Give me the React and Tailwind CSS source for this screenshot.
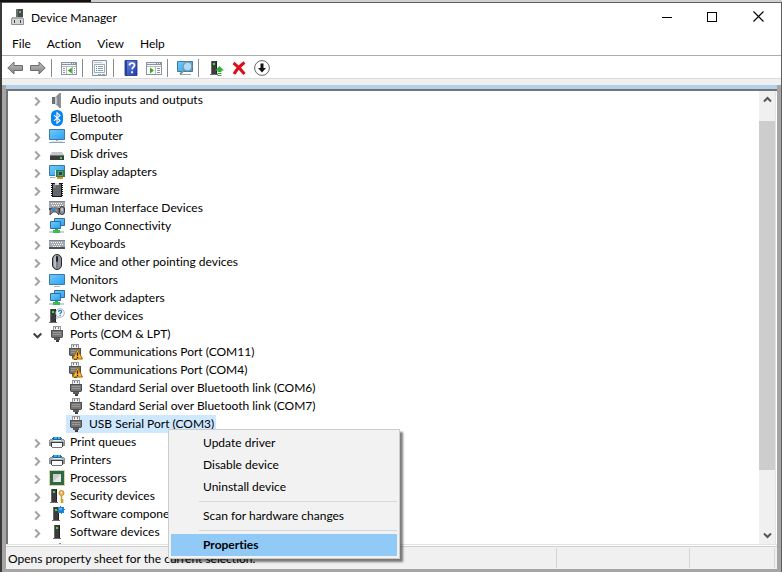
import React from "react";

function Svg({ children, w = 16, h = 16, className = "" }) {
  return (
    <svg width={w} height={h} viewBox={`0 0 ${w} ${h}`} className={`block shrink-0 ${className}`} aria-hidden="true">
      {children}
    </svg>
  );
}

function Defs() {
  return (
    <svg width="0" height="0" className="absolute" aria-hidden="true">
      <defs>
        <linearGradient id="screen" x1="0" y1="0" x2="1" y2="1">
          <stop offset="0" stopColor="#6fcbfb" />
          <stop offset="1" stopColor="#2f9ff0" />
        </linearGradient>
        <linearGradient id="metal" x1="0" y1="0" x2="1" y2="0">
          <stop offset="0" stopColor="#c3c6ca" />
          <stop offset="1" stopColor="#5f6368" />
        </linearGradient>
        <linearGradient id="arrow" x1="0" y1="0" x2="0" y2="1">
          <stop offset="0" stopColor="#c0c0c0" />
          <stop offset="1" stopColor="#808080" />
        </linearGradient>
        <linearGradient id="help" x1="0" y1="0" x2="1" y2="1">
          <stop offset="0" stopColor="#6f8ce0" />
          <stop offset="1" stopColor="#1c3aa8" />
        </linearGradient>
      </defs>
    </svg>
  );
}

const Tower = ({ x = 3 }) => (
  <g transform={`translate(${x} 0)`} shapeRendering="crispEdges">
    <path d="M1 1h6v13H1z" fill="#3b3b3b" />
    <path d="M1 1h1v13H1z" fill="#6b6b6b" />
    <path d="M6 1h1v13H6z" fill="#222" />
    <path d="M0 14h8v1H0z" fill="#6b6b6b" />
    <path d="M3 3h2v2H3z" fill="#35e04a" />
  </g>
);

const Plug = () => (
  <g shapeRendering="crispEdges">
    <path d="M4 0h8v5H4z" fill="#9a9a9a" />
    <path d="M5 1h6v3H5z" fill="#f2f2f2" />
    <path d="M6 1h1v2H6zM9 1h1v2H9z" fill="#777" />
    <path d="M2 4h12v8H2z" fill="#4f4f4f" />
    <path d="M3 5h10v6H3z" fill="#757575" />
    <path d="M4 6h8v1H4zM4 8h8v1H4z" fill="#989898" />
    <path d="M2 11h1v1H2zM13 11h1v1h-1z" fill="#bdbdbd" />
    <path d="M5 12h6v2H5z" fill="#5c5c5c" />
    <path d="M7 14h3v2H7z" fill="#3d3d3d" />
  </g>
);

const Printer = () => (
  <g shapeRendering="crispEdges">
    <path d="M4 3h8v1H4zM3 4h10v2H3z" fill="#1667b4" />
    <path d="M5 3h3v2H5z" fill="#39a6e8" />
    <path d="M9 3h2v2H9z" fill="#3fcf9a" />
    <path d="M1 5h3v1H1zM12 5h3v1h-3zM0 6h16v6H0z" fill="#8d9094" />
    <path d="M1 6h14v2H1z" fill="#b3b6b9" />
    <path d="M4 6h8v1H4z" fill="#d8eefa" />
    <path d="M2 8h12v1H2z" fill="#3a3d40" />
    <path d="M2 9h1v4H2zM13 9h1v4h-1z" fill="#3a3d40" />
    <path d="M3 9h10v4H3z" fill="#fdfdfd" />
    <path d="M3 13h10v1H3z" fill="#70757a" />
  </g>
);

const NetMonitors = () => (
  <g>
    <path d="M5.500.5h10v7h-10z" fill="url(#screen)" stroke="#2f6f9d" />
    <path d="M1.500 3.500h10v7h-10z" fill="url(#screen)" stroke="#2f6f9d" />
    <path d="M6 11h3v2H6z" fill="#2fae43" />
    <path d="M0 13h15v2H0z" fill="#c9d0d5" />
    <path d="M4 12h7v3H4z" fill="#3cbb4f" />
  </g>
);

const Keys = ({ y = 4 }) => (
  <g transform={`translate(0 ${y})`} shapeRendering="crispEdges">
    <path d="M0 0h16v9H0z" fill="#a3a9af" />
    <path d="M0 7h16v2H0z" fill="#4c5258" />
    <path d="M2 2.500h12M3 4.500h11M4 6.500h8" stroke="#fff" strokeDasharray="1 1" />
    <path d="M0 0h16v1H0z" fill="#80868d" />
  </g>
);

const icons = {
  audio: (
    <g>
      <path d="M3 5h3v7H3z" fill="#6c7075" />
      <path d="M6 5l5-4v15l-5-4z" fill="url(#metal)" />
      <path d="M10 1h2v15h-2z" fill="#8e9196" />
      <path d="M7 6v6" stroke="#dfe1e3" />
    </g>
  ),
  bluetooth: (
    <g>
      <rect x="2" y="0" width="12" height="16" rx="5.500" fill="#0a84f0" />
      <path d="M5 5.200l6 5.300-3 2.800V2.700l3 2.800-6 5.300" fill="none" stroke="#fff" strokeWidth="1.100" />
    </g>
  ),
  computer: (
    <g>
      <path d="M.5 1.500h15v10H.5z" fill="url(#screen)" stroke="#3b7aa6" />
      <path d="M7 12h2v1H7z" fill="#a7b4be" />
      <path d="M0 14h16v1H0z" fill="#8fa3b3" />
      <path d="M2 13h12v1H2z" fill="#dce4ea" />
    </g>
  ),
  disk: (
    <g>
      <path d="M3 6h10l2 3H1z" fill="#c4c6c8" />
      <path d="M1 9h14v5H1z" fill="#3a3c3e" />
      <path d="M1 9h14v1H1z" fill="#77797b" />
      <path d="M11 11h2v2h-2z" fill="#35e04a" />
    </g>
  ),
  display: (
    <g>
      <path d="M.5 1.500h15v10H.5z" fill="url(#screen)" stroke="#3b7aa6" />
      <path d="M7 6h9v7H7z" fill="#2d7b52" />
      <path d="M9 7h5v5H9z" fill="#5d9a78" />
      <path d="M10 8h3v3h-3z" fill="#1c4c35" />
      <path d="M6 6h1v8H6z" fill="#e8e8e8" />
      <path d="M8 13h6v2H8z" fill="#f09a1c" />
      <path d="M10 13v2M12 13v2" stroke="#c4700d" strokeWidth=".6" />
      <path d="M1 13h5v1H1z" fill="#9fb0bd" />
    </g>
  ),
  firmware: (
    <g shapeRendering="crispEdges">
      <path d="M2 1h2v1H2zM2 3h2v1H2zM2 5h2v1H2zM2 7h2v1H2zM2 9h2v1H2zM2 11h2v1H2zM2 13h2v1H2zM12 1h2v1h-2zM12 3h2v1h-2zM12 5h2v1h-2zM12 7h2v1h-2zM12 9h2v1h-2zM12 11h2v1h-2zM12 13h2v1h-2z" fill="#111" />
      <path d="M3 1h10v14H3z" fill="#161616" />
      <path d="M4 2h8v12H4z" fill="#63666a" />
      <path d="M4 2h3v4H4z" fill="#7c7f82" />
      <path d="M6 1h4v2H6z" fill="#e6e6e6" />
    </g>
  ),
  hid: (
    <g>
      <Keys y={1} />
      <path d="M1 15v-5q1-3 4-2h2q3-1 3 3v4l-3-3H4z" fill="#85898f" stroke="#35383b" strokeWidth=".8" />
      <path d="M3 8h3v3H3z" fill="#1f8de0" />
      <path d="M6 7h2v2H6z" fill="#e0602d" />
      <rect x="10.500" y="6.500" width="5" height="8" rx="2.500" fill="#8c9299" stroke="#2a2d30" strokeWidth=".9" />
      <path d="M13 8v3" stroke="#eee" />
    </g>
  ),
  network: <NetMonitors />,
  keyboard: <Keys y={4} />,
  mouse: (
    <g>
      <rect x="3.500" y=".5" width="9" height="15" rx="4.500" fill="#8d949e" stroke="#26282b" />
      <path d="M5 5q0-3 2-4v13q-2-1-2-4z" fill="#b8bec6" />
      <rect x="7" y="2" width="2" height="6" rx="1" fill="#222" />
      <path d="M8 8v6" stroke="#686e76" />
    </g>
  ),
  monitor: (
    <g>
      <path d="M.5 2.500h15v10H.5z" fill="url(#screen)" stroke="#3b7aa6" />
      <path d="M5 14h6v1H5z" fill="#a9b7c1" />
    </g>
  ),
  other: (
    <g>
      <Tower x={0} />
      <path d="M7.500 7.500l-.5 3.500 3.500-2" fill="#f5fafd" stroke="#93a4b0" strokeWidth=".6" />
      <circle cx="11" cy="5" r="4.300" fill="#f5fafd" stroke="#93a4b0" strokeWidth=".8" />
      <path d="M9.500 3.800q.2-1.400 1.600-1.400t1.500 1.400q0 .9-1.500 1.700v.8M11.100 7v1" fill="none" stroke="#1976bd" strokeWidth="1.100" />
    </g>
  ),
  port: <Plug />,
  portWarn: (
    <g>
      <g transform="translate(-1 0)"><Plug /></g>
      <path d="M9.500 5.500l5 9.500H4.500z" fill="#f9b83a" stroke="#a86400" />
      <path d="M9.500 8.500v3.300M9.500 12.800v1.400" stroke="#2b1b00" strokeWidth="1.300" />
    </g>
  ),
  printer: <Printer />,
  cpu: (
    <g>
      <path d="M.5.5h15v15H.5z" fill="none" stroke="#b9a44c" strokeDasharray="1 1" />
      <path d="M1 1h14v14H1z" fill="#2d6849" />
      <path d="M4 4h8v8H4z" fill="#c9ccca" />
      <path d="M4 12l8-8v8z" fill="#e6e8e7" />
    </g>
  ),
  security: (
    <g>
      <Tower x={1} />
      <circle cx="12.500" cy="5" r="2.500" fill="#f2c063" stroke="#c48a24" />
      <path d="M12.500 7.500V15M12.500 12h2M12.500 14h2" stroke="#d09428" strokeWidth="1.500" />
      <path d="M12 4h1v1h-1z" fill="#fff" />
    </g>
  ),
  component: (
    <g>
      <Tower x={3} />
      <g shapeRendering="crispEdges">
        <path d="M9 1h2V0h1v1h3v2h1v1h-1v3h-2v1h-1V7H9V5H8V4h1z" fill="#1e84d2" />
        <path d="M10 2h3v2h-3z" fill="#5db1ee" />
      </g>
    </g>
  ),
  tower: <Tower x={4} />,
};

const tree = [
  ["audio", "Audio inputs and outputs"],
  ["bluetooth", "Bluetooth"],
  ["computer", "Computer"],
  ["disk", "Disk drives"],
  ["display", "Display adapters"],
  ["firmware", "Firmware"],
  ["hid", "Human Interface Devices"],
  ["network", "Jungo Connectivity"],
  ["keyboard", "Keyboards"],
  ["mouse", "Mice and other pointing devices"],
  ["monitor", "Monitors"],
  ["network", "Network adapters"],
  ["other", "Other devices"],
  [
    "port",
    "Ports (COM & LPT)",
    [
      ["portWarn", "Communications Port (COM11)"],
      ["portWarn", "Communications Port (COM4)"],
      ["port", "Standard Serial over Bluetooth link (COM6)"],
      ["port", "Standard Serial over Bluetooth link (COM7)"],
      ["port", "USB Serial Port (COM3)"],
    ],
  ],
  ["printer", "Print queues"],
  ["printer", "Printers"],
  ["cpu", "Processors"],
  ["security", "Security devices"],
  ["component", "Software components"],
  ["tower", "Software devices"],
];

function Chevron({ open }) {
  return (
    <Svg w={9} h={11}>
      {open ? (
        <path d="M.7 3.500l3.800 3.800 3.800-3.800" fill="none" stroke="#404040" strokeWidth="2" />
      ) : (
        <path d="M2.200 1.500L6.200 5.500l-4 4" fill="none" stroke="#a3a3a3" strokeWidth="2" />
      )}
    </Svg>
  );
}

function TreeNode({ node: [icon, label, children] }) {
  return (
    <li role="treeitem" aria-expanded={!!children} aria-selected="false">
      <div className="flex h-[18px] items-center">
        <button type="button" aria-label={`Toggle ${label}`} className="flex w-4 pt-0.5">
          <Chevron open={!!children} />
        </button>
        <Svg>{icons[icon]}</Svg>
        <span className="pl-[5px]">{label}</span>
      </div>
      {children && (
        <ul role="group" className="pl-[33px]">
          {children.map(([ic, text]) => {
            const selected = text.startsWith("USB");
            return (
              <li
                key={text}
                role="treeitem"
                aria-selected={selected}
                className={`flex h-[18px] w-fit items-center pr-0.5 pl-0.5 ${selected ? "bg-[#cde8ff]" : ""}`}
              >
                <Svg>{icons[ic]}</Svg>
                <span className="pl-[5px]">{text}</span>
              </li>
            );
          })}
        </ul>
      )}
    </li>
  );
}

function ToolButton({ label, w, children }) {
  return (
    <button type="button" aria-label={label} className="flex h-[22px] w-[23px] items-center justify-center">
      <Svg w={w}>{children}</Svg>
    </button>
  );
}

const ToolSep = () => <div className="mr-[5px] ml-0.5 h-[18px] w-px bg-[#8a8a8a]" />;

function Toolbar() {
  return (
    <div role="toolbar" aria-label="Tools" className="flex h-[23px] items-center border-b border-[#dadada] pt-0.5 pl-px">
      <ToolButton label="Back">
        <path d="M.8 8L7 2v3.500h8.500v5H7V14z" fill="url(#arrow)" stroke="#6c6c6c" />
      </ToolButton>
      <ToolButton label="Forward">
        <path d="M15.200 8L9 2v3.500H.5v5H9V14z" fill="url(#arrow)" stroke="#6c6c6c" />
      </ToolButton>
      <ToolSep />
      <ToolButton label="Show or hide console tree">
        <g shapeRendering="crispEdges">
          <path d="M0 2h16v13H0z" fill="#8795a3" />
          <path d="M1 5h14v9H1z" fill="#fff" />
          <path d="M1 3h9v1H1zM11 3h1v1h-1zM13 3h1v1h-1z" fill="#e8edf1" />
          <path d="M1 6h14v1H1zM5 7h1v7H5zM11 7h1v7h-1z" fill="#b1bac2" />
          <path d="M2 8h2v1H2zM2 10h2v1H2zM2 12h2v1H2zM13 8h1v1h-1zM13 10h1v1h-1zM13 12h1v1h-1z" fill="#8795a3" />
        </g>
        <path d="M10.800 7.500v6l-4-3z" fill="#3aa51f" />
      </ToolButton>
      <ToolSep />
      <ToolButton label="Properties">
        <path d="M.5.5h14v15H.5z" fill="#f2f5f7" stroke="#8593a0" />
        <path d="M2.500 4.500h10v8h-10z" fill="#fff" stroke="#a0acb7" />
        <path d="M2 2h8v1H2z" fill="#c1cad1" />
        <path d="M4 6h1v1H4zM4 8h1v1H4zM4 10h1v1H4z" fill="#2288d0" />
        <path d="M6 6h5v1H6zM6 8h5v1H6zM6 10h5v1H6z" fill="#8d99a4" />
        <path d="M6 14h3v1H6zM10 14h3v1h-3z" fill="#96a2ad" />
      </ToolButton>
      <ToolSep />
      <ToolButton label="Help">
        <path d="M2 .5h12v15H2z" fill="url(#help)" stroke="#1b3185" strokeWidth=".8" />
        <path d="M2 .5h2v15H2z" fill="#243f9e" />
        <path d="M6.500 5.500q0-2.300 2.500-2.300t2.500 2q0 1.300-1.300 2.100-1 .6-1 2.200M9.100 11.200v2" fill="none" stroke="#fff" strokeWidth="1.800" />
      </ToolButton>
      <ToolButton label="Show or hide action pane">
        <g shapeRendering="crispEdges">
          <path d="M0 2h16v13H0z" fill="#8795a3" />
          <path d="M1 5h14v9H1z" fill="#fff" />
          <path d="M1 3h9v1H1zM11 3h1v1h-1zM13 3h1v1h-1z" fill="#e8edf1" />
          <path d="M1 6h14v1H1zM9 7h1v7H9z" fill="#b1bac2" />
          <path d="M11 8h3v1h-3zM11 10h3v1h-3zM11 12h3v1h-3z" fill="#8795a3" />
        </g>
        <path d="M4 7.500v6l4-3z" fill="#3aa51f" />
      </ToolButton>
      <ToolSep />
      <ToolButton label="Scan for hardware changes" w={18}>
        <path d="M1.500 1.500h15v10h-15z" fill="url(#screen)" stroke="#3b7aa6" />
        <path d="M4 14h11v1H4z" fill="#8fa3b3" />
        <circle cx="11.500" cy="6.500" r="4.300" fill="#a9defb" stroke="#8796a2" strokeWidth="1.200" />
        <path d="M8.500 9.800l-4.500 4.400" stroke="#7c8c98" strokeWidth="1.800" />
      </ToolButton>
      <ToolSep />
      <ToolButton label="Update driver">
        <Tower x={2} />
        <path d="M11.500 6l4.500 4.500h-2.500V12h-4v-1.500H7zM9.500 13h4v1h-4zM9.500 15h4v1h-4z" fill="#35ad3c" />
      </ToolButton>
      <ToolButton label="Uninstall device">
        <path d="M2.500 3Q8 7 13.500 14M13.500 2.500Q7 7 3 14" fill="none" stroke="#dc0f1c" strokeWidth="3" />
      </ToolButton>
      <ToolButton label="Disable device">
        <circle cx="8" cy="8" r="7.400" fill="#fff" stroke="#555" strokeWidth=".9" />
        <path d="M6.500 3.500h3V8H12l-4 4.500L4 8h2.500z" fill="#111" />
      </ToolButton>
    </div>
  );
}

function TitleBar() {
  return (
    <header className="flex h-[27px] items-center">
      <Svg className="ml-2">
        <path d="M6 0h7v10H6z" fill="#4a4a4a" />
        <path d="M6 0h2v10H6z" fill="#6d6d6d" />
        <path d="M9 2h2v2H9z" fill="#35e04a" />
        <path d="M1.500 9.500h12v6h-12z" fill="#d3d5d7" stroke="#8d9195" />
        <path d="M2 8h11v2H2z" fill="#a8abae" />
        <path d="M4 11h1v3H4zM10 11h1v3h-1z" fill="#444" />
      </Svg>
      <h1 className="flex-1 pt-0.5 pl-[5px]">Device Manager</h1>
      <button type="button" aria-label="Minimize" className="flex h-full w-[45px] items-center justify-center">
        <Svg w={11} h={11}><path d="M0 6.500h10" stroke="#000" /></Svg>
      </button>
      <button type="button" aria-label="Maximize" className="flex h-full w-[45px] items-center justify-center">
        <Svg w={11} h={11}><path d="M.5 1h9v9h-9z" fill="none" stroke="#000" shapeRendering="crispEdges" /></Svg>
      </button>
      <button type="button" aria-label="Close" className="flex h-full w-[46px] items-center justify-center">
        <Svg w={11} h={11}><path d="M.5.5l10 10M10.500.5l-10 10" stroke="#000" strokeWidth="1.100" /></Svg>
      </button>
    </header>
  );
}

function ScrollBar() {
  return (
    <div className="flex w-[17px] shrink-0 flex-col border-r border-[#e3e3e3] bg-[#f0f0f0]">
      <button type="button" aria-label="Scroll up" className="flex h-[17px] items-center justify-center">
        <Svg w={9} h={7}><path d="M1 5.500L4.500 2 8 5.500" fill="none" stroke="#555" strokeWidth="2" /></Svg>
      </button>
      <div className="flex flex-1 flex-col pt-[13px]">
        <div className="h-[86%] bg-[#cdcdcd]" />
      </div>
      <button type="button" aria-label="Scroll down" className="flex h-[17px] items-center justify-center">
        <Svg w={9} h={7}><path d="M1 1.500L4.500 5 8 1.500" fill="none" stroke="#555" strokeWidth="2" /></Svg>
      </button>
    </div>
  );
}

function MenuItem({ children, active }) {
  return (
    <button
      type="button"
      role="menuitem"
      className={`flex h-[22px] w-full items-center pl-8 text-left ${active ? "bg-[#91c9f7] font-bold" : ""}`}
    >
      {children}
    </button>
  );
}

const MenuSep = () => <div role="separator" className="my-[3px] ml-7 h-px bg-[#d7d7d7]" />;

function ContextMenu() {
  return (
    <div
      role="menu"
      className="absolute top-[429px] left-[168px] w-[232px] border border-[#cccccc] bg-[#f2f2f2] p-0.5 shadow-[3px_3px_2px_rgba(0,0,0,0.5)]"
    >
      <MenuItem>Update driver</MenuItem>
      <MenuItem>Disable device</MenuItem>
      <MenuItem>Uninstall device</MenuItem>
      <MenuSep />
      <MenuItem>Scan for hardware changes</MenuItem>
      <MenuSep />
      <MenuItem active>Properties</MenuItem>
    </div>
  );
}

export default function App() {
  return (
    <div className="relative flex h-screen flex-col overflow-hidden bg-[#3a3a3a] font-['Lato','Open_Sans',sans-serif] text-[12px] leading-[16px] whitespace-nowrap text-black [font-variant-ligatures:none]">
      <Defs />
      <div className="flex h-0.5 shrink-0 bg-[#cdd1d4]">
        <div className="w-[91px] bg-[#141210]" />
      </div>
      <div className="ml-0.5 flex min-h-0 flex-1 flex-col border-t border-r border-[#5f5f5f] bg-white">
        <TitleBar />
        <nav className="flex h-[26px] items-center gap-4 border-b border-[#adadad] pt-0.5 pl-2.5">
          {["File", "Action", "View", "Help"].map((m) => (
            <button key={m} type="button">{m}</button>
          ))}
        </nav>
        <Toolbar />
        <div className="h-1.5 shrink-0 bg-[#f0f0f0]" />
        <div className="flex min-h-0 flex-1 flex-col bg-[#a5a5a5] px-1 pb-[3px]">
          <div className="h-1 shrink-0 bg-[#b4cfe9]" />
          <main className="flex min-h-0 flex-1 border-t-2 border-l-2 border-[#747474] bg-white">
            <ul role="tree" aria-label="Devices" className="min-w-0 flex-1 overflow-hidden pl-[25px]">
              {tree.map((n) => (
                <TreeNode key={n[1]} node={n} />
              ))}
              <li role="treeitem" aria-selected="false" className="flex h-[18px] items-center pl-4">
                <Svg>{icons.audio}</Svg>
              </li>
            </ul>
            <ScrollBar />
            <div className="w-px bg-white" />
          </main>
          <div className="h-px shrink-0 bg-[#e3e3e3]" />
          <div className="h-px shrink-0 bg-white" />
          <footer className="flex h-[23px] shrink-0 items-center border-t border-[#d0d0d0] bg-[#f0f0f0] pr-0.5">
            <p className="flex-1 pt-0.5 pl-0.5">Opens property sheet for the current selection.</p>
            <div className="h-5 w-[133px] border-l border-[#d5d5d5]" />
            <div className="h-5 w-[86px] border-x border-[#d5d5d5]" />
          </footer>
        </div>
      </div>
      <ContextMenu />
    </div>
  );
}
